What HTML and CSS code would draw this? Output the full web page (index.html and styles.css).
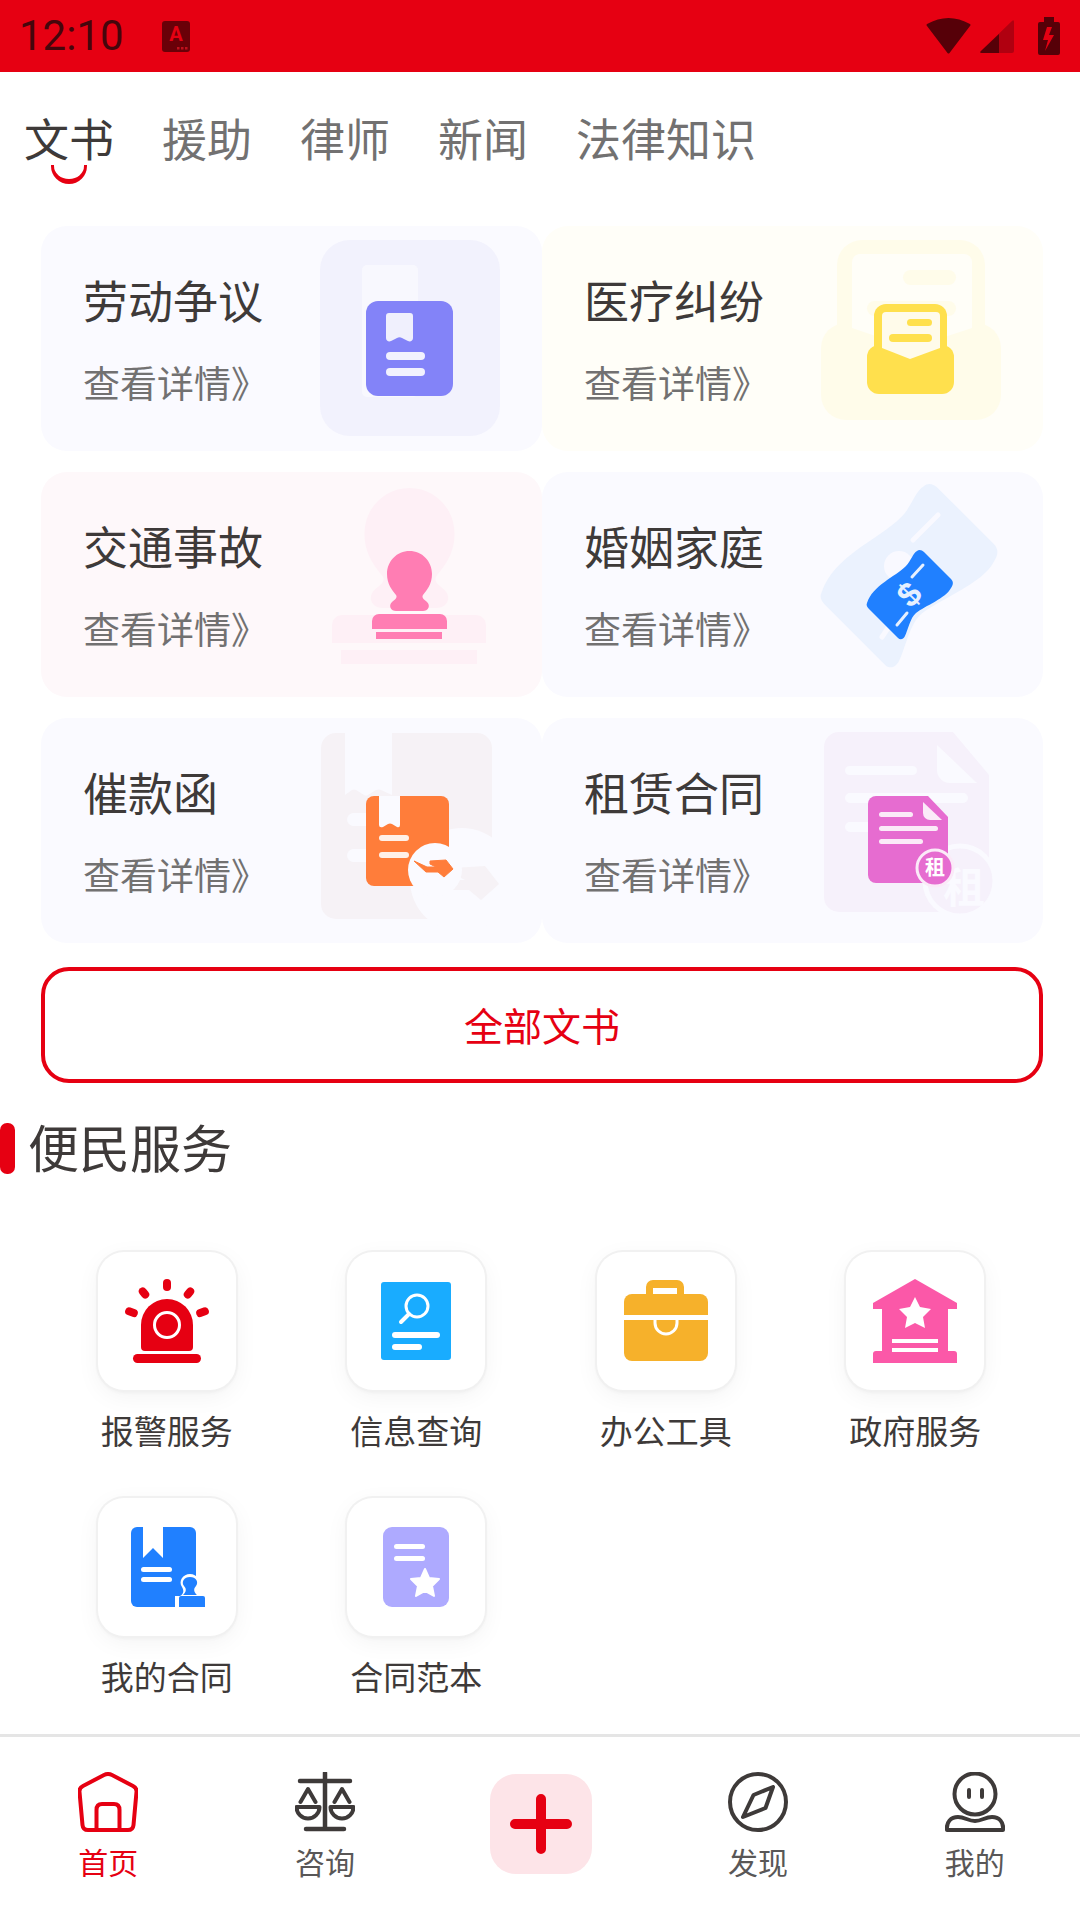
FILE: index.html
```html
<!DOCTYPE html>
<html lang="zh">
<head>
    <meta charset="UTF-8">
    <meta name="viewport" content="width=device-width, initial-scale=1.0">
    <title>文书</title>
    <link rel="stylesheet" href="styles.css">
</head>
<body>
    <div class="status-bar">
        <span class="time">12:10</span>
        <svg class="status-a" width="28" height="31" viewBox="0 0 28 31">
            <rect width="28" height="31" rx="3" fill="#6a0008"/>
            <text x="14" y="20" class="status-a-text">A</text>
            <rect x="15" y="26" width="2.5" height="2.5" fill="#c0101c"/>
            <rect x="19" y="26" width="2.5" height="2.5" fill="#c0101c"/>
            <rect x="23" y="26" width="2.5" height="2.5" fill="#c0101c"/>
        </svg>
        <span class="status-space"></span>
        <svg width="45" height="36" viewBox="0 0 45 36">
            <path d="M1 6 Q22.500 -6 44 6 Q45 7 44 8 L23.500 35 Q22.500 36 21.500 35 L1 8 Q0 7 1 6 Z" fill="#560008"/>
        </svg>
        <svg class="status-signal" width="34" height="33" viewBox="0 0 34 33">
            <path d="M32 1 Q34 -1 34 2 V31 Q34 33 32 33 H2 Q-1 33 1 31 Z" fill="#b00010"/>
            <path d="M19 14 V33 H2 Q-1 33 1 31 Z" fill="#560008"/>
        </svg>
        <svg class="status-battery" width="22" height="38" viewBox="0 0 22 38">
            <path d="M6 0 H16 V5 H20 A2 2 0 0 1 22 7 V36 A2 2 0 0 1 20 38 H2 A2 2 0 0 1 0 36 V7 A2 2 0 0 1 2 5 H6 Z" fill="#560008"/>
            <path d="M9 10 L5 23 H10 L7 34 L16 18 H11 L14 10 Z" fill="#e60012"/>
        </svg>
    </div>

    <div class="tabs">
        <span class="tab active">文书</span>
        <span class="tab">援助</span>
        <span class="tab">律师</span>
        <span class="tab">新闻</span>
        <span class="tab">法律知识</span>
    </div>

    <div class="cards">
        <div class="card card-violet">
            <div class="card-text">
                <div class="card-title">劳动争议</div>
                <div class="card-link">查看详情》</div>
            </div>
            <svg class="card-art" width="240" height="225" viewBox="302 226 240 225">
                <rect x="320" y="240" width="180" height="196" rx="30" fill="#f2f2fd"/>
                <rect x="362" y="265" width="56" height="132" rx="5" fill="#f8f8fe"/>
                <rect x="366" y="301" width="87" height="95" rx="12" fill="#8383f8"/>
                <path d="M389 313 H410 A3 3 0 0 1 413 316 V338 C413 341 410 342 408 341 L402 338 C400.500 337 398.500 337 397 338 L391 341 C389 342 386 341 386 338 V316 A3 3 0 0 1 389 313 Z" fill="#f0f0fd"/>
                <rect x="386" y="352" width="39" height="8" rx="4" fill="#f2f2fe"/>
                <rect x="386" y="368" width="39" height="8" rx="4" fill="#f2f2fe"/>
            </svg>
        </div>
        <div class="card card-yellow">
            <div class="card-text">
                <div class="card-title">医疗纠纷</div>
                <div class="card-link">查看详情》</div>
            </div>
            <svg class="card-art" width="240" height="225" viewBox="803 226 240 225">
                <rect x="837" y="240" width="148" height="120" rx="25" fill="#fffcea"/>
                <rect x="821" y="323" width="180" height="97" rx="25" fill="#fffcea"/>
                <path d="M859 254 H964 A8 8 0 0 1 972 262 V328 L911 348 L852 328 V262 A8 8 0 0 1 859 254 Z" fill="#fffef8"/>
                <rect x="903" y="270" width="53" height="15" rx="7.500" fill="#fffcea"/>
                <rect x="867" y="301" width="89" height="15" rx="7.500" fill="#fffcea"/>
                <rect x="874" y="304" width="73" height="60" rx="12" fill="#ffe04d"/>
                <rect x="867" y="345" width="87" height="49" rx="12" fill="#ffe04d"/>
                <path d="M886 312 H936 A4 4 0 0 1 940 316 V348 L910 359 L882 348 V316 A4 4 0 0 1 886 312 Z" fill="#fffbea"/>
                <rect x="907" y="319" width="25" height="7" rx="3.500" fill="#ffe04d"/>
                <rect x="889" y="334" width="43" height="8" rx="4" fill="#ffe04d"/>
            </svg>
        </div>
        <div class="card card-pink">
            <div class="card-text">
                <div class="card-title">交通事故</div>
                <div class="card-link">查看详情》</div>
            </div>
            <svg class="card-art" width="240" height="225" viewBox="302 472 240 225">
                <path transform="translate(409.5 488) scale(2) translate(-409.5 -551)" d="M409.5 551 C422 551 432 561 432 574 C432 584 427 590 423 595 C421 598 425 600 427 602 C431 606 428 611 423 611 H396 C391 611 388 606 392 602 C394 600 398 598 396 595 C392 590 387 584 387 574 C387 561 397 551 409.500 551 Z" fill="#fef0f6"/>
                <path d="M342 615 H476 A10 10 0 0 1 486 625 V643 H332 V625 A10 10 0 0 1 342 615 Z" fill="#fef0f6"/>
                <rect x="341" y="650" width="136" height="14" fill="#fef0f6"/>
                <path d="M409.5 551 C422 551 432 561 432 574 C432 584 427 590 423 595 C421 598 425 600 427 602 C431 606 428 611 423 611 H396 C391 611 388 606 392 602 C394 600 398 598 396 595 C392 590 387 584 387 574 C387 561 397 551 409.500 551 Z" fill="#ff7db3"/>
                <path d="M379 614 H440 A7 7 0 0 1 447 621 V629 H372 V621 A7 7 0 0 1 379 614 Z" fill="#ff7db3"/>
                <rect x="376" y="632" width="66" height="7" fill="#ff7db3"/>
            </svg>
        </div>
        <div class="card card-violet">
            <div class="card-text">
                <div class="card-title">婚姻家庭</div>
                <div class="card-link">查看详情》</div>
            </div>
            <svg class="card-art" width="240" height="225" viewBox="803 472 240 225">
                <path transform="translate(909.5 575.5) scale(2.05) translate(-910 -594.5)" d="M867 603 C873 585 895 577 906 566 C911 561 913 553 917 551 C919 549 922 550 924 552 L951 579 C954 582 953 585 951 588 C946 598 925 606 916 613 C910 618 908 630 905 636 C903 640 900 640 898 638 L869 609 C867 607 866 605 867 603 Z" fill="#ebf2fe"/>
                <path d="M938 515 L913 540 M888 628 L882 637" stroke="#f9f9ff" stroke-width="5" stroke-linecap="round"/>
                <circle cx="899" cy="566" r="15" fill="#f9f9ff"/>
                <path d="M867 603 C873 585 895 577 906 566 C911 561 913 553 917 551 C919 549 922 550 924 552 L951 579 C954 582 953 585 951 588 C946 598 925 606 916 613 C910 618 908 630 905 636 C903 640 900 640 898 638 L869 609 C867 607 866 605 867 603 Z" fill="#2080ff"/>
                <path d="M923 565 L912 577 M907 613 L897 625" stroke="#e6f0ff" stroke-width="3" stroke-linecap="round"/>
                <text x="909" y="606" transform="rotate(-45 909 594)" class="money-sign">$</text>
            </svg>
        </div>
        <div class="card card-violet">
            <div class="card-text">
                <div class="card-title">催款函</div>
                <div class="card-link">查看详情》</div>
            </div>
            <svg class="card-art" width="240" height="225" viewBox="302 718 240 225">
                <rect x="321" y="733" width="171" height="186" rx="15" fill="#f6f2f6"/>
                <path d="M345 733 H392 V795 L381 790 Q379 789 376 790 L368 795 Q366 796 364 795 L356 790 Q354 789 352 790 L345 795 Z" fill="#fafaff"/>
                <rect x="347" y="813" width="40" height="13" rx="6.500" fill="#fafaff"/>
                <rect x="347" y="849" width="40" height="13" rx="6.500" fill="#fafaff"/>
                <circle cx="462" cy="880" r="52" fill="#fafaff"/>
                <path transform="translate(459 884) scale(2) translate(-433 -869)" d="M414 861 L427 867 L436 867 L430 864 L430 861 L446 860 L453 869 L444 877 L438 872 L426 872 Z" fill="#f6f2f6"/>
                <rect x="366" y="796" width="83" height="90" rx="8" fill="#ff7d3a"/>
                <path d="M379 796 H400 V825 Q400 828 397 827 L392 824 Q390 823 388 824 L383 827 Q379 828 379 825 Z" fill="#fafaff"/>
                <rect x="379" y="835" width="30" height="6" rx="3" fill="#fff0e8"/>
                <rect x="379" y="852" width="30" height="6" rx="3" fill="#fff0e8"/>
                <circle cx="435" cy="870" r="27" fill="#fafaff"/>
                <path d="M414 861 L427 867 L436 867 L430 864 L430 861 L446 860 L453 869 L444 877 L438 872 L426 872 Z" fill="#ff7d3a" stroke="#ff7d3a" stroke-linejoin="round"/>
            </svg>
        </div>
        <div class="card card-violet">
            <div class="card-text">
                <div class="card-title">租赁合同</div>
                <div class="card-link">查看详情》</div>
            </div>
            <svg class="card-art" width="240" height="225" viewBox="803 718 240 225">
                <path d="M839 732 H953 L989 775 V897 A15 15 0 0 1 974 912 H839 A15 15 0 0 1 824 897 V747 A15 15 0 0 1 839 732 Z" fill="#f6f1fb"/>
                <path d="M937 745 L977 783 H950 A13 13 0 0 1 937 770 Z" fill="#fafaff"/>
                <rect x="845" y="766" width="72" height="9" rx="4.500" fill="#fafaff"/>
                <rect x="845" y="793" width="123" height="10" rx="5" fill="#fafaff"/>
                <rect x="845" y="822" width="50" height="10" rx="5" fill="#fafaff"/>
                <circle cx="960" cy="881" r="35" fill="#f6f1fb" stroke="#fafaff" stroke-width="5"/>
                <text x="964" y="903" class="rent-big">租</text>
                <path d="M876 796 H928 L948 817 V875 A8 8 0 0 1 940 883 H876 A8 8 0 0 1 868 875 V804 A8 8 0 0 1 876 796 Z" fill="#e66cd0"/>
                <path d="M923 802 L942 820 H930 A7 7 0 0 1 923 813 Z" fill="#fbeaf8"/>
                <rect x="879" y="812" width="34" height="5" rx="2.500" fill="#fbeaf8"/>
                <rect x="879" y="826" width="59" height="5" rx="2.500" fill="#fbeaf8"/>
                <rect x="879" y="839" width="44" height="5" rx="2.500" fill="#fbeaf8"/>
                <circle cx="935" cy="868" r="18" fill="#e66cd0" stroke="#fbeaf8" stroke-width="3"/>
                <text x="935" y="875" class="rent-small">租</text>
            </svg>
        </div>
    </div>

    <div class="all-btn">全部文书</div>

    <div class="section-head">
        <span class="section-bar"></span>
        <span class="section-title">便民服务</span>
    </div>

    <div class="services">
        <div class="service">
            <div class="tile">
                <svg width="138" height="138" viewBox="98 1252 138 138">
                    <path d="M141 1325 A26 26 0 0 1 193 1325 V1347 A4 4 0 0 1 189 1351 H145 A4 4 0 0 1 141 1347 Z" fill="#e60012"/>
                    <circle cx="167" cy="1325" r="12.500" fill="#e60012" stroke="#fff" stroke-width="3"/>
                    <rect x="133" y="1354" width="68" height="9" rx="4.500" fill="#e60012"/>
                    <rect x="163" y="1279" width="8" height="12" rx="4" fill="#e60012"/>
                    <rect x="140" y="1287" width="8" height="12" rx="4" transform="rotate(-38 144 1293)" fill="#e60012"/>
                    <rect x="185" y="1287" width="8" height="12" rx="4" transform="rotate(38 189 1293)" fill="#e60012"/>
                    <rect x="127" y="1306" width="8" height="13" rx="4" transform="rotate(-70 131 1312)" fill="#e60012"/>
                    <rect x="199" y="1306" width="8" height="13" rx="4" transform="rotate(70 203 1312)" fill="#e60012"/>
                </svg>
            </div>
            <div class="service-name">报警服务</div>
        </div>
        <div class="service">
            <div class="tile">
                <svg width="138" height="138" viewBox="348 1252 138 138">
                    <rect x="382" y="1282" width="70" height="78" rx="3" fill="#19acff"/>
                    <circle cx="418" cy="1306" r="11" fill="none" stroke="#fff" stroke-width="3"/>
                    <path d="M410 1314 L402 1322" stroke="#fff" stroke-width="4" stroke-linecap="round"/>
                    <rect x="393" y="1332" width="48" height="6" rx="3" fill="#fff"/>
                    <rect x="393" y="1344" width="30" height="6" rx="3" fill="#fff"/>
                </svg>
            </div>
            <div class="service-name">信息查询</div>
        </div>
        <div class="service">
            <div class="tile">
                <svg width="138" height="138" viewBox="597 1252 138 138">
                    <path d="M646 1296 V1287 A7 7 0 0 1 653 1280 H677 A7 7 0 0 1 684 1287 V1296 H677 V1288 H653 V1296 Z" fill="#f6b12b"/>
                    <rect x="624" y="1294" width="84" height="67" rx="8" fill="#f6b12b"/>
                    <rect x="624" y="1315" width="84" height="5" fill="#fff"/>
                    <path d="M655 1320 V1323 A11 11 0 0 0 677 1323 V1320" fill="#f6b12b" stroke="#fff" stroke-width="3"/>
                </svg>
            </div>
            <div class="service-name">办公工具</div>
        </div>
        <div class="service">
            <div class="tile">
                <svg width="138" height="138" viewBox="847 1252 138 138">
                    <path d="M916 1279 L958 1303 V1309 H949 V1351 H955 A3 3 0 0 1 958 1354 V1363 H874 V1354 A3 3 0 0 1 877 1351 H883 V1309 H874 V1303 Z" fill="#fb58a8"/>
                    <path d="M916 1297 L921 1307 L932 1309 L924 1317 L926 1328 L916 1323 L906 1328 L908 1317 L900 1309 L911 1307 Z" fill="#fff"/>
                    <rect x="893" y="1339" width="46" height="4" fill="#fff"/>
                    <rect x="893" y="1348" width="46" height="4" fill="#fff"/>
                </svg>
            </div>
            <div class="service-name">政府服务</div>
        </div>
        <div class="service">
            <div class="tile">
                <svg width="138" height="138" viewBox="98 1498 138 138">
                    <rect x="131" y="1527" width="65" height="80" rx="6" fill="#2080ff"/>
                    <path d="M143 1527 H163 V1558 L153 1548 L143 1558 Z" fill="#fff"/>
                    <rect x="141" y="1567" width="31" height="5" rx="2.500" fill="#fff"/>
                    <rect x="141" y="1577" width="31" height="5" rx="2.500" fill="#fff"/>
                    <path d="M175 1612 V1596 H180 C184 1594 184 1590 182 1587 C178 1581 183 1574 190 1574 C197 1574 202 1581 198 1587 C196 1590 196 1594 200 1596 H208 V1612 Z" fill="#fff"/>
                    <path d="M179 1607 V1598 A2 2 0 0 1 181 1596 H203 A2 2 0 0 1 205 1598 V1607 Z" fill="#2080ff"/>
                    <path d="M190 1577 C196 1577 199 1582 196 1586 C193 1589 194 1592 197 1595 H183 C186 1592 187 1589 184 1586 C181 1582 184 1577 190 1577 Z" fill="#2080ff"/>
                </svg>
            </div>
            <div class="service-name">我的合同</div>
        </div>
        <div class="service">
            <div class="tile">
                <svg width="138" height="138" viewBox="348 1498 138 138">
                    <rect x="384" y="1527" width="66" height="80" rx="9" fill="#aeaaff"/>
                    <rect x="395" y="1544" width="31" height="5" rx="2.500" fill="#fff"/>
                    <rect x="395" y="1556" width="31" height="5" rx="2.500" fill="#fff"/>
                    <path d="M426 1569 L430 1578 L440 1579 L433 1586 L435 1596 L426 1591 L417 1596 L419 1586 L412 1579 L422 1578 Z" fill="#fff" stroke="#fff" stroke-linejoin="round" stroke-width="2"/>
                </svg>
            </div>
            <div class="service-name">合同范本</div>
        </div>
    </div>

    <div class="nav">
        <div class="nav-item active">
            <svg width="60" height="60" viewBox="0 0 60 60" fill="none" stroke="#e60012" stroke-width="4" stroke-linejoin="round">
                <path d="M26 3 Q30 1 34 3 L55 14 Q59 16 58.500 20 L55.500 53 Q55 58 50 58 H10 Q5 58 4.500 53 L1.500 20 Q1 16 5 14 Z"/>
                <path d="M18.500 58 V38 Q18.500 32 24 32 H36 Q41.500 32 41.500 38 V58"/>
            </svg>
            <span class="nav-label">首页</span>
        </div>
        <div class="nav-item">
            <svg width="60" height="60" viewBox="0 0 60 60" fill="none" stroke="#3e3a39" stroke-width="4" stroke-linecap="round" stroke-linejoin="round">
                <path d="M30 1 V57 M5 9 H55 M11 57 H49" stroke-width="4.500"/>
                <path d="M5.500 30 L13 17 L20.500 30 M1.500 35 H24.500 A11.500 11.500 0 0 1 1.500 35 Z"/>
                <path d="M39.500 30 L47 17 L54.500 30 M35.500 35 H58.500 A11.500 11.500 0 0 1 35.500 35 Z"/>
            </svg>
            <span class="nav-label">咨询</span>
        </div>
        <div class="nav-item">
            <svg class="nav-plus" width="102" height="100" viewBox="0 0 102 100">
                <rect width="102" height="100" rx="26" fill="#fde4e8"/>
                <path d="M25 50 H77 M51 25 V75" stroke="#e60012" stroke-width="10" stroke-linecap="round"/>
            </svg>
        </div>
        <div class="nav-item">
            <svg width="60" height="60" viewBox="0 0 60 60" fill="none" stroke="#3e3a39" stroke-width="4" stroke-linejoin="round">
                <circle cx="30" cy="30" r="28"/>
                <path d="M45 15 L25.500 23 L15 45 L37.500 36 Z"/>
            </svg>
            <span class="nav-label">发现</span>
        </div>
        <div class="nav-item">
            <svg width="60" height="60" viewBox="0 0 60 60" fill="none" stroke="#3e3a39" stroke-width="4" stroke-linecap="round" stroke-linejoin="round">
                <circle cx="30" cy="22" r="20.500"/>
                <path d="M24 18 V25 M37 18 V25"/>
                <path d="M2 58 C1 50 6 45 13 45 C20 45 23 49 30 49 C37 49 40 45 47 45 C54 45 59 50 58 58 Z"/>
            </svg>
            <span class="nav-label">我的</span>
        </div>
    </div>
</body>
</html>
```

FILE: styles.css
```css
* {
    box-sizing: border-box;
}
body {
    margin: 0;
    width: 1080px;
    height: 1920px;
    overflow: hidden;
    display: flex;
    flex-direction: column;
    background-color: #fff;
    font-family: "Noto Sans CJK SC", "Noto Sans", sans-serif;
    color: #3e3a39;
}
body > * {
    flex-shrink: 0;
}
svg {
    display: block;
    flex-shrink: 0;
}

.status-bar {
    height: 72px;
    background-color: #e60012;
    display: flex;
    align-items: center;
    padding: 0 20px 0 19px;
}
.time {
    font-family: Roboto, sans-serif;
    font-size: 42px;
    line-height: 72px;
    color: #45060c;
}
.status-a {
    margin-left: 38px;
}
.status-a-text {
    font-family: Roboto, sans-serif;
    font-size: 20px;
    font-weight: bold;
    fill: #e60012;
    text-anchor: middle;
}
.status-space {
    flex: 1;
}
.status-signal {
    margin-left: 9px;
}
.status-battery {
    margin-left: 24px;
}

.tabs {
    height: 154px;
    display: flex;
    gap: 48px;
    padding: 43px 0 0 24px;
}
.tab {
    position: relative;
    font-size: 45px;
    line-height: 45px;
    height: 45px;
    color: #727171;
}
.tab.active {
    color: #3e3a39;
}
.tab.active::after {
    content: "";
    position: absolute;
    box-sizing: border-box;
    left: 27px;
    top: 50px;
    width: 36px;
    height: 19px;
    border: 3px solid #e60012;
    border-bottom-width: 5px;
    border-top: none;
    border-radius: 0 0 18px 18px;
}

.cards {
    display: grid;
    grid-template-columns: 501px 501px;
    grid-auto-rows: 225px;
    row-gap: 21px;
    padding-left: 41px;
}
.card {
    display: flex;
    justify-content: space-between;
    border-radius: 26px;
    overflow: hidden;
}
.card-violet {
    background-color: #fafaff;
}
.card-yellow {
    background-color: #fffef8;
}
.card-pink {
    background-color: #fef8fa;
}
.card-text {
    padding: 44px 0 0 42px;
}
.card-title {
    font-size: 45px;
    line-height: 60px;
    white-space: nowrap;
}
.card-link {
    margin-top: 27px;
    font-size: 37px;
    line-height: 50px;
    color: #727171;
    white-space: nowrap;
}
.money-sign {
    font-family: "Liberation Sans", sans-serif;
    font-size: 34px;
    font-weight: bold;
    fill: #e6f0ff;
    text-anchor: middle;
}
.rent-big {
    font-size: 42px;
    font-weight: bold;
    fill: #fafaff;
    text-anchor: middle;
}
.rent-small {
    font-size: 20px;
    font-weight: bold;
    fill: #fff;
    text-anchor: middle;
}

.all-btn {
    width: 1002px;
    height: 116px;
    margin: 24px 0 0 41px;
    border: 4px solid #e60012;
    border-radius: 28px;
    color: #e60012;
    font-size: 39px;
    line-height: 106px;
    text-align: center;
}

.section-head {
    display: flex;
    align-items: center;
    gap: 13px;
    height: 51px;
    margin-top: 40px;
}
.section-bar {
    width: 15px;
    height: 51px;
    background-color: #e60012;
    border-radius: 7px;
}
.section-title {
    font-size: 51px;
    line-height: 51px;
    padding-bottom: 4px;
}

.services {
    display: grid;
    grid-template-columns: repeat(4, 249.5px);
    row-gap: 46px;
    padding-left: 42px;
    margin-top: 78px;
}
.service {
    display: flex;
    flex-direction: column;
    align-items: center;
}
.tile {
    width: 138px;
    height: 138px;
    border-radius: 26px;
    background-color: #fff;
    box-shadow: 0 0 0 2px #f1f1f1, 0 2px 4px rgba(0, 0, 0, 0.05), 0 6px 24px rgba(0, 0, 0, 0.05);
}
.service-name {
    margin-top: 18px;
    font-size: 33px;
    line-height: 44px;
}

.nav {
    margin-top: auto;
    height: 186px;
    border-top: 3px solid #e5e5e5;
    display: grid;
    grid-template-columns: repeat(5, 216.6px);
    padding-top: 35px;
}
.nav-item {
    display: flex;
    flex-direction: column;
    align-items: center;
}
.nav-label {
    margin-top: 9px;
    font-size: 30px;
    line-height: 40px;
    color: #595757;
}
.nav-item.active .nav-label {
    color: #e60012;
}
.nav-plus {
    margin-top: 2px;
}
```
